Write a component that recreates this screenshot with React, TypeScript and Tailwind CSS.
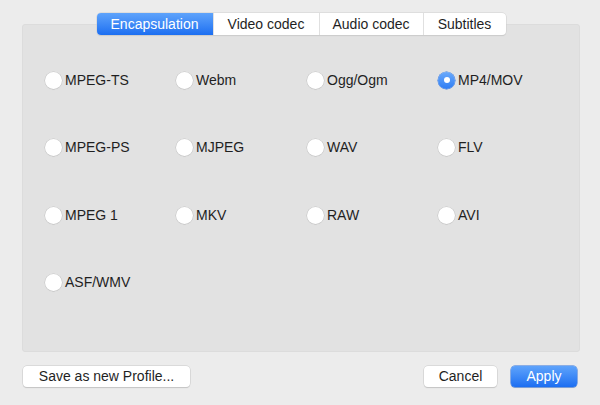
const formats = [
  'MPEG-TS', 'Webm', 'Ogg/Ogm', 'MP4/MOV',
  'MPEG-PS', 'MJPEG', 'WAV', 'FLV',
  'MPEG 1', 'MKV', 'RAW', 'AVI',
  'ASF/WMV',
];

const tabs = [
  { label: 'Encapsulation', width: 'w-[116px]' },
  { label: 'Video codec', width: 'w-[106px]' },
  { label: 'Audio codec', width: 'w-[104px]' },
  { label: 'Subtitles', width: 'w-[83px]' },
];

function Radio({ label, checked }: { label: string; checked: boolean }) {
  return (
    <label className="flex items-center gap-[3px] h-[67.5px]">
      {checked ? (
        <span className="flex items-center justify-center w-[17px] h-[17px] rounded-full bg-gradient-to-b from-[#69a9fb] to-[#2f7df3] shadow-[0_0_0_0.5px_#2f73e0]">
          <span className="w-[6px] h-[6px] rounded-full bg-white" />
        </span>
      ) : (
        <span className="w-[17px] h-[17px] rounded-full bg-white shadow-[0_0_0_0.5px_#c4c4c4,0_0.5px_1px_rgba(0,0,0,0.15)]" />
      )}
      <span className="text-[14px] text-[#1f1f1f]">{label}</span>
    </label>
  );
}

function Button({ children, primary, width }: { children: React.ReactNode; primary?: boolean; width: string }) {
  return (
    <button
      className={
        primary
          ? `${width} h-[21px] rounded-[4px] text-[14px] text-white bg-gradient-to-b from-[#5ea3fb] to-[#1b6ef1] shadow-[0_0_0_0.5px_#2a6fdc,0_1px_1px_rgba(0,0,0,0.15)]`
          : `${width} h-[21px] rounded-[4px] text-[14px] text-[#1f1f1f] bg-white shadow-[0_0_0_0.5px_#c8c8c8,0_1px_1px_rgba(0,0,0,0.18)]`
      }
    >
      {children}
    </button>
  );
}

export default function App() {
  return (
    <div
      className="w-[600px] h-[405px] bg-[#ececec] pt-[24px] overflow-hidden"
      style={{ fontFamily: '"Liberation Sans", Arial, sans-serif' }}
    >
      <div className="ml-[22px] w-[558px] h-[328px] bg-[#e2e2e2] border border-[#dcdcdc] rounded-[3px]">
        <div className="flex justify-center -mt-[12px]">
          <div className="flex h-[22px] bg-white rounded-[4px] shadow-[0_0_0_0.5px_#cfcfcf,0_1px_1px_rgba(0,0,0,0.12)]">
            {tabs.map((t, i) => (
              <div
                key={t.label}
                className={
                  i === 0
                    ? `${t.width} flex items-center justify-center text-[14px] text-white rounded-l-[4px] bg-gradient-to-b from-[#5ea3fb] to-[#1b6ef1]`
                    : `${t.width} flex items-center justify-center text-[14px] text-[#1f1f1f] border-l border-[#e0e0e0]`
                }
              >
                {t.label}
              </div>
            ))}
          </div>
        </div>
        <div className="grid grid-cols-[131px_131px_131px_131px] pl-[22px] pt-[11.5px]">
          {formats.map((f) => (
            <Radio key={f} label={f} checked={f === 'MP4/MOV'} />
          ))}
        </div>
      </div>
      <div className="flex items-center px-[23px] mt-[14px]">
        <Button width="w-[167px]">Save as new Profile...</Button>
        <div className="flex-1" />
        <Button width="w-[73px]">Cancel</Button>
        <div className="w-[14px]" />
        <Button width="w-[66px]" primary>Apply</Button>
      </div>
    </div>
  );
}
